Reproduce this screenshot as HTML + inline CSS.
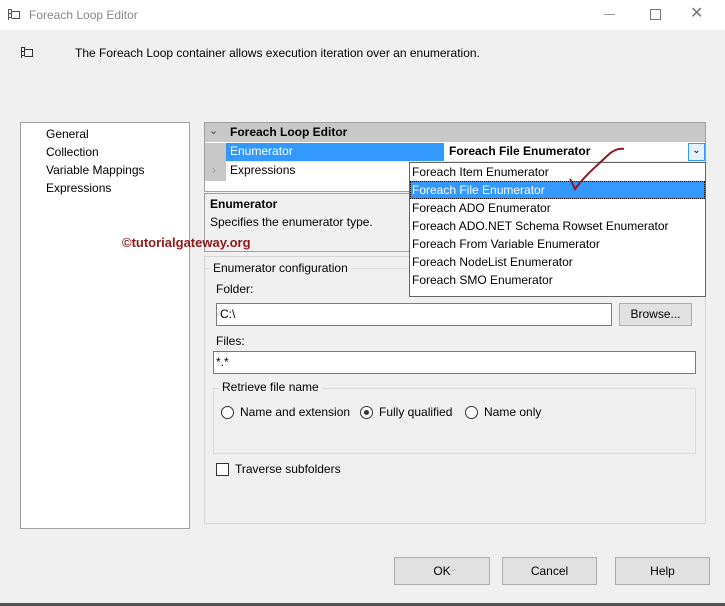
<!DOCTYPE html>
<html><head><style>
*{box-sizing:border-box;margin:0;padding:0}
body{width:725px;height:606px;background:#f0f0f0;font-family:"Liberation Sans",sans-serif;font-size:12px;color:#000;position:relative;overflow:hidden}
.a{position:absolute;white-space:nowrap}
.box{position:absolute;border:1px solid #a0a0a0;background:#fff}
.btn{position:absolute;border:1px solid #adadad;background:#e1e1e1;text-align:center;line-height:26px}
.rad{position:absolute;width:13px;height:13px;border:1px solid #333;border-radius:50%;background:#fff}
</style></head><body>
<div class="a" style="left:0;top:0;width:725px;height:30px;background:#fff"></div>
<svg class="a" style="left:7px;top:8px" width="14" height="13"><path d="M1.5 1v11M1.5 1.5h3v4h-3M1.5 5.5h3v4h-3M4.5 3.5h8v7h-8" fill="none" stroke="#555"/></svg>
<div class="a" style="left:29px;top:8px;color:#888;font-size:12px">Foreach Loop Editor</div>
<div class="a" style="left:604px;top:14px;width:11px;border-top:1px solid #999"></div>
<div class="a" style="left:650px;top:9px;width:11px;height:11px;border:1px solid #777"></div>
<div class="a" style="left:690px;top:3px;color:#777;font-size:16px">✕</div>
<svg class="a" style="left:20px;top:46px" width="14" height="13"><path d="M1.5 1v11M1.5 1.5h3v4h-3M1.5 5.5h3v4h-3M4.5 3.5h8v7h-8" fill="none" stroke="#333"/></svg>
<div class="a" style="left:75px;top:46px">The Foreach Loop container allows execution iteration over an enumeration.</div>

<div class="box" style="left:20px;top:122px;width:170px;height:407px"></div>
<div class="a" style="left:46px;top:125px;line-height:18px">General<br>Collection<br>Variable Mappings<br>Expressions</div>

<div class="a" style="left:204px;top:122px;width:502px;height:70px;border:1px solid #a0a0a0;background:#fff"></div>
<div class="a" style="left:205px;top:123px;width:500px;height:19px;background:#c8c8c8"></div>
<div class="a" style="left:205px;top:143px;width:21px;height:38px;background:#c8c8c8"></div>
<div class="a" style="left:209px;top:124px;font-size:11px;color:#444">⌄</div>
<div class="a" style="left:212px;top:163px;color:#999">›</div>
<div class="a" style="left:230px;top:125px;font-weight:bold">Foreach Loop Editor</div>
<div class="a" style="left:226px;top:143px;width:218px;height:18px;background:#3399ff"></div>
<div class="a" style="left:230px;top:144px;color:#fff">Enumerator</div>
<div class="a" style="left:449px;top:144px;font-weight:bold">Foreach File Enumerator</div>
<div class="a" style="left:688px;top:143px;width:17px;height:18px;border:1px solid #3399ff;background:#e5f1fb;text-align:center;font-size:10px;line-height:14px">⌄</div>
<div class="a" style="left:226px;top:161px;width:479px;border-top:1px solid #e8e8e8"></div>
<div class="a" style="left:230px;top:163px">Expressions</div>

<div class="a" style="left:204px;top:193px;width:502px;height:59px;border:1px solid #a0a0a0;background:#f0f0f0"></div>
<div class="a" style="left:210px;top:197px;font-weight:bold">Enumerator</div>
<div class="a" style="left:210px;top:215px">Specifies the enumerator type.</div>
<div class="a" style="left:122px;top:235px;color:#8b1a1a;font-weight:bold;font-size:13px">©tutorialgateway.org</div>

<div class="a" style="left:204px;top:256px;width:502px;height:268px;border:1px solid #d5d5d5"></div>
<div class="a" style="left:205px;top:268px;width:500px;border-top:1px solid #ddd"></div>
<div class="a" style="left:210px;top:261px;background:#f0f0f0;padding:0 3px">Enumerator configuration</div>
<div class="a" style="left:216px;top:282px">Folder:</div>
<div class="a" style="left:216px;top:303px;width:396px;height:23px;border:1px solid #7a7a7a;background:#fff;padding:3px 3px">C:\</div>
<div class="btn" style="left:619px;top:303px;width:73px;height:23px;line-height:21px">Browse...</div>
<div class="a" style="left:216px;top:334px">Files:</div>
<div class="a" style="left:213px;top:351px;width:483px;height:23px;border:1px solid #7a7a7a;background:#fff;padding:3px 2px">*.*</div>
<div class="a" style="left:213px;top:388px;width:483px;height:66px;border:1px solid #dcdcdc"></div>
<div class="a" style="left:219px;top:380px;background:#f0f0f0;padding:0 3px">Retrieve file name</div>
<div class="rad" style="left:221px;top:406px"></div><div class="a" style="left:240px;top:405px">Name and extension</div>
<div class="rad" style="left:360px;top:406px"></div><div class="a" style="left:364px;top:410px;width:5px;height:5px;border-radius:50%;background:#333"></div><div class="a" style="left:379px;top:405px">Fully qualified</div>
<div class="rad" style="left:465px;top:406px"></div><div class="a" style="left:484px;top:405px">Name only</div>
<div class="a" style="left:216px;top:463px;width:13px;height:13px;border:1px solid #333;background:#fff"></div>
<div class="a" style="left:235px;top:462px">Traverse subfolders</div>

<div class="a" style="left:409px;top:162px;width:297px;height:135px;border:1px solid #646464;background:#fff"></div>
<div class="a" style="left:410px;top:181px;width:295px;height:18px;background:#3399ff;border:1px dotted #000"></div>
<div class="a" style="left:412px;top:163px;line-height:18px">Foreach Item Enumerator<br><span style="color:#fff">Foreach File Enumerator</span><br>Foreach ADO Enumerator<br>Foreach ADO.NET Schema Rowset Enumerator<br>Foreach From Variable Enumerator<br>Foreach NodeList Enumerator<br>Foreach SMO Enumerator</div>
<svg class="a" style="left:560px;top:140px" width="70" height="55"><path d="M64 9 C58 8 52 11 47 16 C38 25 26 34 15 49 C13 45 12 42 10 39" fill="none" stroke="#8b1a2a" stroke-width="2"/></svg>

<div class="btn" style="left:394px;top:557px;width:96px;height:28px">OK</div>
<div class="btn" style="left:502px;top:557px;width:95px;height:28px">Cancel</div>
<div class="btn" style="left:615px;top:557px;width:95px;height:28px">Help</div>
<div class="a" style="left:0;top:603px;width:725px;height:3px;background:#555"></div>
</body></html>
